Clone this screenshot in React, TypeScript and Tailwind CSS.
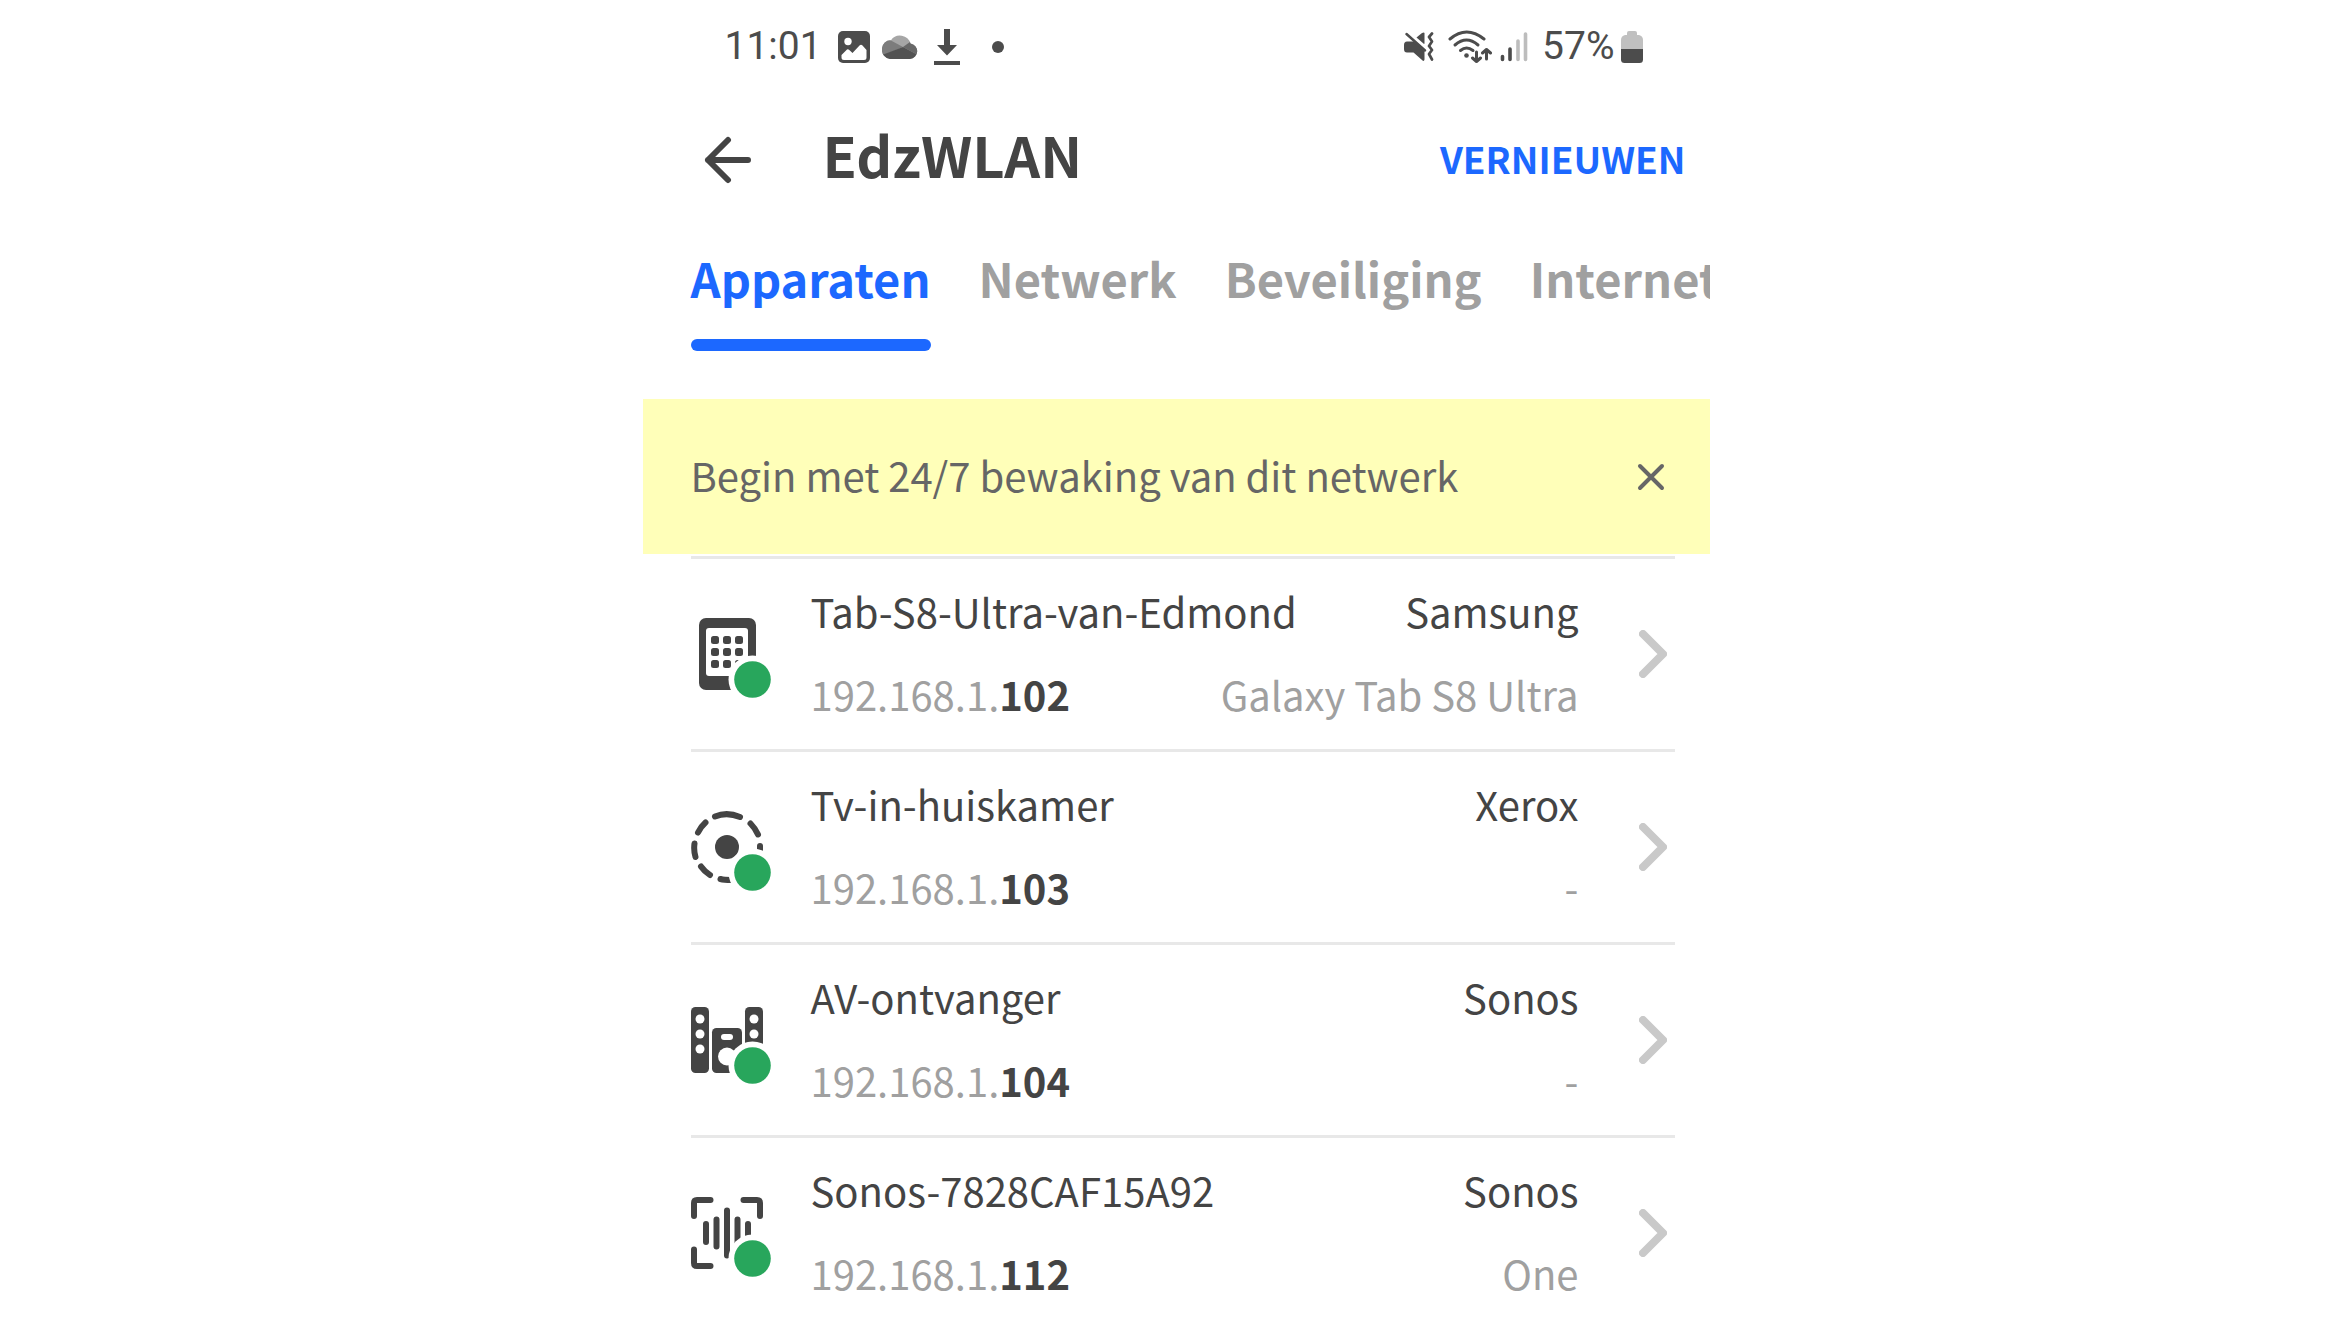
import React from "react";

type DeviceKind = "tablet" | "generic" | "speakers" | "scanner";

interface Device {
  name: string;
  network: string;
  host: string;
  brand: string;
  model: string;
  kind: DeviceKind;
}

const devices: Device[] = [
  { name: "Tab-S8-Ultra-van-Edmond", network: "192.168.1.", host: "102", brand: "Samsung", model: "Galaxy Tab S8 Ultra", kind: "tablet" },
  { name: "Tv-in-huiskamer", network: "192.168.1.", host: "103", brand: "Xerox", model: "-", kind: "generic" },
  { name: "AV-ontvanger", network: "192.168.1.", host: "104", brand: "Sonos", model: "-", kind: "speakers" },
  { name: "Sonos-7828CAF15A92", network: "192.168.1.", host: "112", brand: "Sonos", model: "One", kind: "scanner" },
];

const tabs = ["Apparaten", "Netwerk", "Beveiliging", "Internet"];

function DeviceGlyph({ kind }: { kind: DeviceKind }) {
  if (kind === "tablet") {
    return (
      <g>
        <rect x="8" y="0" width="57" height="72" rx="7" fill="#444" />
        <rect x="15" y="10" width="42" height="48" rx="3" fill="#fff" />
        {[18, 30, 42].map((y) =>
          [20, 32, 44].map((x) => <rect key={`${x}-${y}`} x={x} y={y} width="8" height="8" rx="2.5" fill="#444" />)
        )}
      </g>
    );
  }
  if (kind === "generic") {
    return (
      <g>
        <circle cx="36" cy="36" r="12" fill="#444" />
        <g fill="none" stroke="#444" strokeWidth="6" strokeLinecap="round">
          <path d="M24 5.5 Q36 0.5 49 6" />
          <path d="M59.5 12.5 Q64 17 67 23.5" />
          <path d="M69 35 V39" />
          <path d="M14.5 11.5 Q10 15.5 7 21.5" />
          <path d="M3.5 32.5 Q2.5 39 4.5 46" />
          <path d="M10 55.5 Q13.5 60.5 19 64" />
          <path d="M29.5 68 Q33 69 40 69" />
        </g>
      </g>
    );
  }
  if (kind === "speakers") {
    return (
      <g>
        <rect x="0" y="3" width="18" height="66" rx="4.5" fill="#444" />
        <rect x="54" y="3" width="18" height="66" rx="4.5" fill="#444" />
        <rect x="21" y="24" width="30" height="45" rx="4.5" fill="#444" />
        {[15, 30, 45].map((y) => (
          <g key={y} fill="#fff">
            <circle cx="9" cy={y} r="4.5" />
            <circle cx="63" cy={y} r="4.5" />
          </g>
        ))}
        <rect x="30" y="30" width="12" height="6" rx="3" fill="#fff" />
        <circle cx="36" cy="52.5" r="9" fill="#fff" />
      </g>
    );
  }
  return (
    <g fill="none" stroke="#444" strokeWidth="6" strokeLinecap="round" strokeLinejoin="round">
      <path d="M3 19 V6 Q3 3 6 3 H19.5" />
      <path d="M52.5 3 H66 Q69 3 69 6 V19" />
      <path d="M3 52.5 V66 Q3 69 6 69 H19.5" />
      <path d="M15 27 V45 M25.5 22.5 V49.5 M36 13.5 V58.5 M46.5 22.5 V49.5 M57 27 V45" />
    </g>
  );
}

function DeviceIcon({ kind }: { kind: DeviceKind }) {
  return (
    <svg viewBox="0 0 88 88" className="-mb-4 size-[88px] shrink-0" aria-hidden="true">
      <DeviceGlyph kind={kind} />
      <circle cx="61.5" cy="61.5" r="24" fill="#fff" />
      <circle cx="61.5" cy="61.5" r="18.3" fill="#28a65c" />
    </svg>
  );
}

function StatusBar() {
  return (
    <div className="flex h-[93px] items-center justify-between pr-[67px] pl-[82px] font-[Roboto,sans-serif] text-[39px] text-[#4c4c4c]">
      <div className="flex items-center">
        <span className="w-[113px]">11:01</span>
        <svg viewBox="0 0 32 32" className="size-8" aria-hidden="true">
          <rect width="32" height="32" rx="5" fill="#4c4c4c" />
          <circle cx="10" cy="10.5" r="3.7" fill="#fff" />
          <path d="M3.5 24 L9 18.5 Q10 17.8 11 18.7 L14.5 22 L21.5 14.5 Q23 13 24.5 14.5 L28.5 19 V26.5 Q28.5 29 26 29 H6 Q3.5 29 3.5 26.5 Z" fill="#fff" />
        </svg>
        <svg viewBox="0 0 36 24" className="ml-3 h-6 w-9" aria-hidden="true">
          <defs>
            <clipPath id="cloud">
              <path d="M8 24 A8.5 9.3 0 1 1 9 5.2 A11 11 0 0 1 28.5 8.5 A7.8 7.8 0 0 1 28 24 Z" />
            </clipPath>
          </defs>
          <g clipPath="url(#cloud)">
            <rect width="36" height="24" fill="#a6a6a6" />
            <path d="M0 0 L8 5 L21 12 L0 21 Z" fill="#7c7c7c" />
            <path d="M21 12 L28 7 H36 V20 Z" fill="#686868" />
            <path d="M0 20 L21 12 L36 20 V24 H0 Z" fill="#525252" />
          </g>
        </svg>
        <svg viewBox="0 0 26 36" className="ml-4 h-9 w-[26px]" aria-hidden="true">
          <path d="M10 0 H16 V16 H23 L13 26.5 L3 16 H10 Z M0 32 H26 V36 H0 Z" fill="#4c4c4c" />
        </svg>
        <span className="ml-8 size-3 rounded-full bg-[#4c4c4c]" />
      </div>
      <div className="flex items-center">
        <svg viewBox="0 0 30 30" className="size-[30px]" aria-hidden="true">
          <path d="M20.5 1 V11.5 L20 12 L12.5 5.5 L18 1 Q20 0 20.5 1 Z" fill="#4c4c4c" />
          <path d="M3 9.5 H10 L20.5 19 V27.5 Q20 30 18 28 L9.5 20.500 H3 Q0 20.500 0 17 V13 Q0 9.500 3 9.500 Z" fill="#4c4c4c" />
          <path d="M2.5 2 L21 18.5" stroke="#4c4c4c" strokeWidth="2.5" strokeLinecap="round" />
          <path d="M28 1.5 L25 5 L28 9.5 L25 14 L28 18 L25 22 L28 27.5" fill="none" stroke="#4c4c4c" strokeWidth="2.7" strokeLinecap="round" strokeLinejoin="round" />
        </svg>
        <svg viewBox="0 0 44 34" className="ml-3.5 h-[34px] w-11" aria-hidden="true">
          <g fill="none" stroke="#4c4c4c" strokeWidth="3" strokeLinecap="round" strokeLinejoin="round">
            <path d="M2 9 Q18.5 -5 36 9" />
            <path d="M7 15 Q18.5 5 30 15" />
            <path d="M12.5 20.5 Q18.5 15.5 25 20.5" />
            <path d="M28.5 22 V31.5 M24.5 28 L28.5 31.5 L32.5 28 M38.5 29 V19.5 M34.5 23 L38.5 19.5 L42.5 23" />
          </g>
          <circle cx="18.5" cy="25.5" r="2.3" fill="#4c4c4c" />
        </svg>
        <svg viewBox="0 0 28 30" className="ml-2 h-[30px] w-7" aria-hidden="true">
          <g strokeWidth="3.6" strokeLinecap="round">
            <path d="M2.5 24.5 V27.5 M10 17 V27.5" stroke="#4c4c4c" />
            <path d="M18 9 V27.5 M25.5 2 V27.5" stroke="#bdbdbd" />
          </g>
        </svg>
        <span className="ml-3.5">57%</span>
        <svg viewBox="0 0 22 32" className="ml-1.5 h-8 w-[22px]" aria-hidden="true">
          <path d="M8 0 H14 Q16 0 16 2 V4 H18 Q22 5 22 9 V18 H0 V9 Q0 5 4 4 H6 V2 Q6 0 8 0 Z" fill="#c0c0c0" />
          <path d="M0 18 H22 V28.5 Q22 32 18.5 32 H3.5 Q0 32 0 28.5 Z" fill="#4c4c4c" />
        </svg>
      </div>
    </div>
  );
}

function DeviceRow({ device }: { device: Device }) {
  return (
    <li className="border-t-3 border-[#e8e8e8]">
      <a href="#" className="flex h-[190px] items-center pr-2">
        <DeviceIcon kind={device.kind} />
        <span className="ml-8 flex min-w-0 flex-1 flex-col pb-0.5 text-[40px] leading-[83px] whitespace-nowrap">
          <span className="flex justify-between">
            <span>{device.name}</span>
            <span>{device.brand}</span>
          </span>
          <span className="flex justify-between text-[#a0a0a0]">
            <span>
              {device.network}
              <b className="font-bold text-[#444]">{device.host}</b>
            </span>
            <span>{device.model}</span>
          </span>
        </span>
        <svg viewBox="0 0 28 48" className="ml-[60px] h-12 w-7 shrink-0" aria-hidden="true">
          <path d="M4 4 L24 24 L4 44" fill="none" stroke="#c9c9c9" strokeWidth="8" strokeLinecap="round" strokeLinejoin="round" />
        </svg>
      </a>
    </li>
  );
}

export default function App() {
  return (
    <main className="h-screen overflow-hidden bg-white font-['Noto_Sans_CJK_SC',sans-serif] text-[#444]">
      <div className="mx-auto w-full max-w-[1067px] overflow-hidden">
        <StatusBar />
        <header className="flex h-[133px] items-center pr-6 pl-[61px]">
          <button type="button" aria-label="Terug">
            <svg viewBox="0 0 48 48" className="size-12" aria-hidden="true">
              <path d="M24 4 L4 24 L24 44 M4 24 H44" fill="none" stroke="#444" strokeWidth="6" strokeLinecap="round" strokeLinejoin="round" />
            </svg>
          </button>
          <h1 className="ml-[71px] flex-1 pb-3 text-[56px] leading-[64px] font-bold">EdzWLAN</h1>
          <button type="button" className="pb-1 text-[37px] leading-[48px] font-bold text-[#1c68ff]">
            VERNIEUWEN
          </button>
        </header>
        <nav className="flex gap-12 overflow-hidden pl-12 text-[47px] leading-[103px] font-bold text-[#a0a0a0]">
          {tabs.map((tab, i) => (
            <a key={tab} href="#" aria-current={i === 0 ? "page" : undefined} className={i === 0 ? "text-[#1c68ff]" : ""}>
              {tab}
              {i === 0 && <span className="mt-2.5 block h-3 rounded-full bg-[#1c68ff]" />}
            </a>
          ))}
        </nav>
        <div className="mt-12 flex h-[155px] items-center justify-between bg-[#ffffb9] pr-[45px] pl-12 text-[40px] text-[#666]">
          <p className="pb-1">Begin met 24/7 bewaking van dit netwerk</p>
          <button type="button" aria-label="Sluiten">
            <svg viewBox="0 0 28 28" className="size-7" aria-hidden="true">
              <path d="M3 3 L25 25 M25 3 L3 25" stroke="#666" strokeWidth="4" strokeLinecap="round" />
            </svg>
          </button>
        </div>
        <ul className="mt-0.5 mr-[35px] ml-12">
          {devices.map((device) => (
            <DeviceRow key={device.name} device={device} />
          ))}
        </ul>
      </div>
    </main>
  );
}
